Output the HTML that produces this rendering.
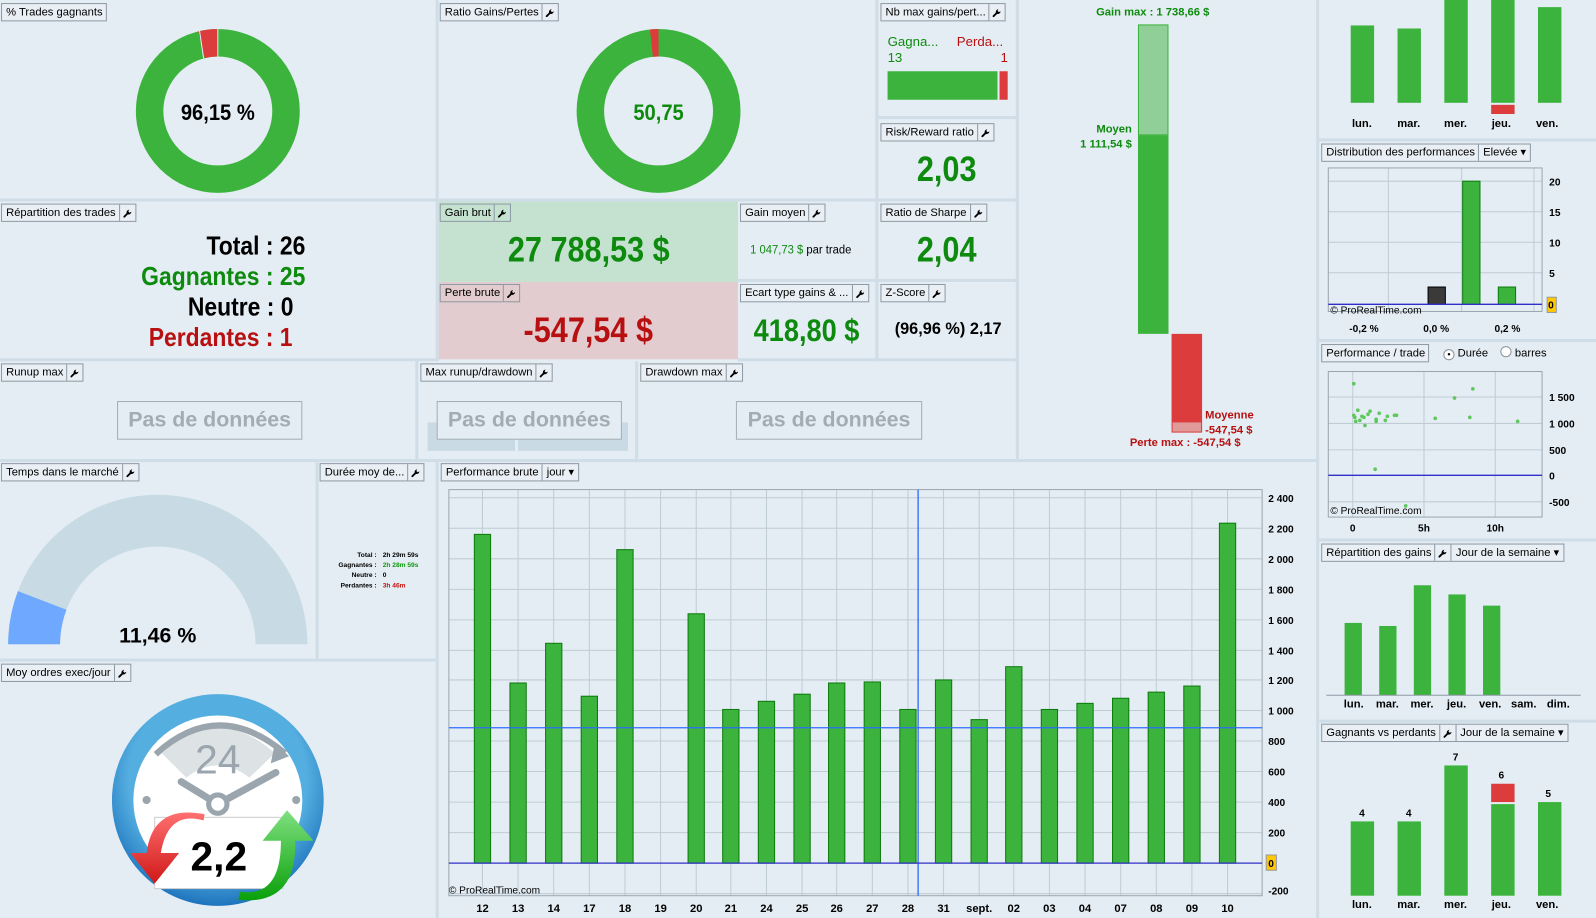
<!DOCTYPE html>
<html><head><meta charset="utf-8">
<style>
html,body{margin:0;padding:0;width:1596px;height:918px;overflow:hidden;background:#e4edf4;}
#root{position:absolute;left:0;top:0;width:1568px;height:902px;transform:scale(1.01786);transform-origin:0 0;font-family:"Liberation Sans",sans-serif;background:#e4edf4;}
.p{position:absolute;box-sizing:border-box;border-right:3px solid #d0dde7;border-bottom:3px solid #d0dde7;}
.h{position:absolute;display:flex;height:16px;border:1px solid #8e9aa4;background:#e9eff4;font-size:11px;line-height:16px;color:#000;white-space:nowrap;box-sizing:content-box;}
.h span{padding:0 3px 0 4px;}
.h i{border-left:1px solid #8e9aa4;width:15px;display:flex;align-items:center;justify-content:center;}
.h b{border-left:1px solid #8e9aa4;padding:0 4px;font-weight:normal;}
.t{position:absolute;white-space:nowrap;}
.cn{display:inline-block;transform:scaleX(.86);}
.nd{position:absolute;border:1px solid #a3adb5;color:#a3acb4;font-weight:bold;font-size:21px;text-align:center;line-height:36px;height:36px;background:#e4edf4;}
svg text{font-family:"Liberation Sans",sans-serif;}
</style></head><body><div id="root">
<svg width="0" height="0" style="position:absolute"><defs><symbol id="w" viewBox="0 0 10 10"><path d="M1.2 8.8L5 5" stroke="#000" stroke-width="2" stroke-linecap="round"/><path d="M4 5.5A3 3 0 0 1 6.2 1.2L6.6 1.1 5.6 3 7 4.4 8.9 3.4A3 3 0 0 1 4.5 6Z" fill="#000"/></symbol></defs></svg>

<!-- panels separators -->
<div class="p" style="left:0;top:0;width:431px;height:198px"></div>
<div class="p" style="left:431px;top:0;width:432px;height:198px"></div>
<div class="p" style="left:863px;top:0;width:138px;height:117px"></div>
<div class="p" style="left:863px;top:117px;width:138px;height:81px"></div>
<div class="p" style="left:1001px;top:0;width:295px;height:454px"></div>
<div class="p" style="left:0;top:198px;width:431px;height:157px"></div>
<div class="p" style="left:431px;top:198px;width:294px;height:79px;background:#c5e2d1;border-right:none;border-bottom:none"></div>
<div class="p" style="left:431px;top:277px;width:294px;height:76px;background:#e3ccd0;border-right:none;border-bottom:none"></div>
<div class="p" style="left:725px;top:198px;width:138px;height:79px"></div>
<div class="p" style="left:725px;top:277px;width:138px;height:78px"></div>
<div class="p" style="left:863px;top:198px;width:138px;height:79px"></div>
<div class="p" style="left:863px;top:277px;width:138px;height:78px"></div>
<div class="p" style="left:0;top:355px;width:411px;height:99px"></div>
<div class="p" style="left:411px;top:355px;width:216px;height:99px"></div>
<div class="p" style="left:627px;top:355px;width:374px;height:99px"></div>
<div class="p" style="left:0;top:454px;width:313px;height:196px"></div>
<div class="p" style="left:313px;top:454px;width:118px;height:196px"></div>
<div class="p" style="left:0;top:650px;width:431px;height:252px;border-bottom:none"></div>
<div class="p" style="left:431px;top:454px;width:865px;height:448px;border-bottom:none"></div>
<div class="p" style="left:1296px;top:0;width:272px;height:139px;border-right:none"></div>
<div class="p" style="left:1296px;top:139px;width:272px;height:197px;border-right:none"></div>
<div class="p" style="left:1296px;top:336px;width:272px;height:196px;border-right:none"></div>
<div class="p" style="left:1296px;top:532px;width:272px;height:178px;border-right:none"></div>

<!-- headers -->
<div class="h" style="left:1px;top:3px"><span>% Trades gagnants</span></div>
<div class="h" style="left:432px;top:3px"><span>Ratio Gains/Pertes</span><i><svg width="9" height="9"><use href="#w"/></svg></i></div>
<div class="h" style="left:865px;top:3px"><span>Nb max gains/pert...</span><i><svg width="9" height="9"><use href="#w"/></svg></i></div>
<div class="h" style="left:865px;top:121px"><span>Risk/Reward ratio</span><i><svg width="9" height="9"><use href="#w"/></svg></i></div>
<div class="h" style="left:1px;top:200px"><span>Répartition des trades</span><i><svg width="9" height="9"><use href="#w"/></svg></i></div>
<div class="h" style="left:432px;top:200px;background:#c5e2d1"><span>Gain brut</span><i><svg width="9" height="9"><use href="#w"/></svg></i></div>
<div class="h" style="left:432px;top:279px;background:#e3ccd0"><span>Perte brute</span><i><svg width="9" height="9"><use href="#w"/></svg></i></div>
<div class="h" style="left:727px;top:200px"><span>Gain moyen</span><i><svg width="9" height="9"><use href="#w"/></svg></i></div>
<div class="h" style="left:727px;top:279px"><span>Ecart type gains &amp; ...</span><i><svg width="9" height="9"><use href="#w"/></svg></i></div>
<div class="h" style="left:865px;top:200px"><span>Ratio de Sharpe</span><i><svg width="9" height="9"><use href="#w"/></svg></i></div>
<div class="h" style="left:865px;top:279px"><span>Z-Score</span><i><svg width="9" height="9"><use href="#w"/></svg></i></div>
<div class="h" style="left:1px;top:357px"><span>Runup max</span><i><svg width="9" height="9"><use href="#w"/></svg></i></div>
<div class="h" style="left:413px;top:357px"><span>Max runup/drawdown</span><i><svg width="9" height="9"><use href="#w"/></svg></i></div>
<div class="h" style="left:629px;top:357px"><span>Drawdown max</span><i><svg width="9" height="9"><use href="#w"/></svg></i></div>
<div class="h" style="left:1px;top:455px"><span>Temps dans le marché</span><i><svg width="9" height="9"><use href="#w"/></svg></i></div>
<div class="h" style="left:314px;top:455px"><span>Durée moy de...</span><i><svg width="9" height="9"><use href="#w"/></svg></i></div>
<div class="h" style="left:433px;top:455px"><span>Performance brute</span><b>jour &#9662;</b></div>
<div class="h" style="left:1px;top:652px"><span>Moy ordres exec/jour</span><i><svg width="9" height="9"><use href="#w"/></svg></i></div>
<div class="h" style="left:1298px;top:141px"><span>Distribution des performances</span><b>Elevée &#9662;</b></div>
<div class="h" style="left:1298px;top:338px"><span>Performance / trade</span></div>
<div class="t" style="left:1418px;top:339px;font-size:11px;line-height:16px"><span style="display:inline-block;width:9px;height:9px;border:1px solid #8a949c;border-radius:50%;background:#fff;vertical-align:-1px;text-align:center;line-height:9px;font-size:9px">•</span> Durée &nbsp;&nbsp; <span style="display:inline-block;width:9px;height:9px;border:1px solid #8a949c;border-radius:50%;background:#fff;vertical-align:-1px"></span> barres</div>
<div class="h" style="left:1298px;top:534px"><span>Répartition des gains</span><i><svg width="9" height="9"><use href="#w"/></svg></i><b>Jour de la semaine &#9662;</b></div>
<div class="h" style="left:1298px;top:711px"><span>Gagnants vs perdants</span><i><svg width="9" height="9"><use href="#w"/></svg></i><b>Jour de la semaine &#9662;</b></div>

<!-- donuts -->
<svg class="t" style="left:0;top:0" width="862" height="198">
<circle cx="214" cy="109" r="67" fill="none" stroke="#3cb33c" stroke-width="27"/>
<path d="M214 42A67 67 0 0 0 198 44" fill="none" stroke="#dd3c3c" stroke-width="27"/>
<line x1="214" y1="28" x2="214" y2="56" stroke="#e4edf4" stroke-width="1"/>
<line x1="196" y1="30" x2="200" y2="57" stroke="#e4edf4" stroke-width="1"/>
<text x="214" y="118" text-anchor="middle" font-size="22" font-weight="bold" transform="translate(214 0) scale(.9 1) translate(-214 0)">96,15 %</text>
<circle cx="647" cy="109" r="67" fill="none" stroke="#3cb33c" stroke-width="27"/>
<path d="M647 42A67 67 0 0 0 640 42.4" fill="none" stroke="#dd3c3c" stroke-width="27"/>
<text x="647" y="118" text-anchor="middle" font-size="22" font-weight="bold" fill="#0e8a0e" transform="translate(647 0) scale(.9 1) translate(-647 0)">50,75</text>
</svg>

<!-- Nb max -->
<div class="t" style="left:872px;top:33px;font-size:13px;color:#0e8a0e">Gagna...</div>
<div class="t" style="left:940px;top:33px;font-size:13px;color:#b81010">Perda...</div>
<div class="t" style="left:872px;top:49px;font-size:13px;color:#0e8a0e">13</div>
<div class="t" style="left:983px;top:49px;font-size:13px;color:#b81010">1</div>
<div class="t" style="left:872px;top:70px;width:108px;height:28px;background:#3cb33c"></div>
<div class="t" style="left:982px;top:70px;width:8px;height:28px;background:#dd3c3c"></div>
<div class="t" style="left:863px;top:147px;width:135px;text-align:center;font-size:35px;font-weight:bold;color:#0e8a0e"><span class="cn">2,03</span></div>

<!-- Répartition des trades -->
<div class="t" style="left:0;top:227px;width:300px;text-align:right;font-size:25px;font-weight:bold;line-height:30px;transform:scaleX(.9);transform-origin:300px 0">
<div>Total : 26</div><div style="color:#0e8a0e">Gagnantes : 25</div><div style="padding-right:13px">Neutre : 0</div><div style="color:#b81010;padding-right:14px">Perdantes : 1</div></div>

<div class="t" style="left:431px;top:226px;width:294px;text-align:center;font-size:35px;font-weight:bold;color:#0e8a0e"><span class="cn">27 788,53 $</span></div>
<div class="t" style="left:431px;top:305px;width:294px;text-align:center;font-size:35px;font-weight:bold;color:#b81010"><span class="cn">-547,54 $</span></div>
<div class="t" style="left:737px;top:238px;font-size:12px;color:#0e8a0e;transform:scaleX(.92);transform-origin:0 0">1 047,73 $ <span style="color:#000">par trade</span></div>
<div class="t" style="left:725px;top:307px;width:135px;text-align:center;font-size:31px;font-weight:bold;color:#0e8a0e"><span class="cn">418,80 $</span></div>
<div class="t" style="left:863px;top:226px;width:135px;text-align:center;font-size:35px;font-weight:bold;color:#0e8a0e"><span class="cn">2,04</span></div>
<div class="t" style="left:879px;top:315px;font-size:16px;font-weight:bold">(96,96 %) 2,17</div>

<!-- no data -->
<div class="t" style="left:420px;top:415px;width:86px;height:28px;background:#c9dae4"></div>
<div class="t" style="left:509px;top:415px;width:108px;height:28px;background:#c9dae4"></div>
<div class="nd" style="left:115px;top:394px;width:180px">Pas de données</div>
<div class="nd" style="left:429px;top:394px;width:180px">Pas de données</div>
<div class="nd" style="left:723px;top:394px;width:181px">Pas de données</div>

<!-- gain/loss vertical -->
<div class="t" style="left:1020px;top:6px;width:225px;text-align:center;font-size:11px;font-weight:bold;color:#0e8a0e">Gain max : 1 738,66 $</div>
<div class="t" style="left:1118px;top:24px;width:30px;height:109px;background:#90d098;outline:1px solid #3cb33c;outline-offset:-1px"></div>
<div class="t" style="left:1118px;top:133px;width:30px;height:195px;background:#3cb33c"></div>
<div class="t" style="left:1060px;top:120px;width:52px;text-align:right;font-size:11px;font-weight:bold;color:#0e8a0e;line-height:15px">Moyen<br>1 111,54 $</div>
<div class="t" style="left:1151px;top:328px;width:30px;height:97px;background:#dd3c3c"></div>
<div class="t" style="left:1152px;top:415px;width:28px;height:9px;background:#e09a9a"></div>
<div class="t" style="left:1184px;top:401px;font-size:11px;font-weight:bold;color:#b81010;line-height:15px">Moyenne<br>-547,54 $</div>
<div class="t" style="left:1110px;top:429px;font-size:11px;font-weight:bold;color:#b81010">Perte max : -547,54 $</div>

<!-- temps dans le marché gauge -->
<svg class="t" style="left:0;top:454px" width="313" height="196">
<path d="M8 179A147 147 0 0 1 302 179L251 179A96 96 0 0 0 59 179Z" fill="#c8dbe5"/>
<path d="M8 179A147 147 0 0 1 17.6 126.8L65.3 145A96 96 0 0 0 59 179Z" fill="#6fa8ff"/>
<text x="155" y="177" text-anchor="middle" font-size="21" font-weight="bold">11,46 %</text>
</svg>

<!-- durée moy -->
<div class="t" style="left:316px;top:541px;width:54px;text-align:right;font-size:6.5px;font-weight:bold;line-height:10px">Total :<br>Gagnantes :<br>Neutre :<br>Perdantes :</div>
<div class="t" style="left:376px;top:541px;font-size:6.5px;font-weight:bold;line-height:10px"><span>2h 29m 59s</span><br><span style="color:#0e9a0e">2h 28m 59s</span><br>0<br><span style="color:#c01010">3h 46m</span></div>

<!-- clock -->
<svg class="t" style="left:100px;top:675px" width="230" height="227" viewBox="100 675 230 227">
<defs><radialGradient id="rg" cx="0.5" cy="0.4" r="0.6"><stop offset="0.7" stop-color="#55aee0"/><stop offset="1" stop-color="#1e74bd"/></radialGradient>
<linearGradient id="gr" x1="0" y1="0" x2="0" y2="1"><stop offset="0" stop-color="#7fe07f"/><stop offset="1" stop-color="#0aa00a"/></linearGradient>
<linearGradient id="rd" x1="0" y1="0" x2="0" y2="1"><stop offset="0" stop-color="#ff7070"/><stop offset="1" stop-color="#d01818"/></linearGradient></defs>
<circle cx="214" cy="786" r="104" fill="url(#rg)"/>
<circle cx="214" cy="786" r="83" fill="#fff"/>
<path d="M159 740Q214 690 270 740L245 764Q214 740 183 764Z" fill="#dde2e5"/>
<path d="M153 741Q214 685 280 740" fill="none" stroke="#9aa5ad" stroke-width="6"/>
<path d="M270 730L284 743L266 750Z" fill="#9aa5ad"/>
<text x="214" y="760" text-anchor="middle" font-size="40" fill="#9aa5ad">24</text>
<path d="M178 768L214 790L271 759" fill="none" stroke="#9aa5ad" stroke-width="7" stroke-linecap="round"/>
<circle cx="214" cy="790" r="9" fill="#fff" stroke="#9aa5ad" stroke-width="5"/>
<circle cx="144" cy="786" r="4" fill="#9aa5ad"/><circle cx="291" cy="786" r="4" fill="#9aa5ad"/>
<rect x="152" y="803" width="126" height="70" fill="#fff" stroke="#ccc"/>
<path d="M200 806Q165 796 158 838L176 838L152 868L128 838L144 838Q150 790 201 800Z" fill="url(#rd)"/>
<path d="M236 876Q276 882 276 826L258 826L282 796L308 826L290 826Q292 890 234 884Z" fill="url(#gr)"/>
<text x="215" y="855" text-anchor="middle" font-size="40" font-weight="bold">2,2</text>
</svg>

<!-- performance brute chart -->
<svg class="t" style="left:431px;top:454px" width="865" height="448" viewBox="431 454 865 448">
<g stroke="#bfccd4" stroke-width="1">
<line x1="441" x2="1240" y1="489" y2="489"/><line x1="441" x2="1240" y1="519" y2="519"/><line x1="441" x2="1240" y1="549" y2="549"/><line x1="441" x2="1240" y1="579" y2="579"/><line x1="441" x2="1240" y1="609" y2="609"/><line x1="441" x2="1240" y1="639" y2="639"/><line x1="441" x2="1240" y1="668" y2="668"/><line x1="441" x2="1240" y1="698" y2="698"/><line x1="441" x2="1240" y1="728" y2="728"/><line x1="441" x2="1240" y1="758" y2="758"/><line x1="441" x2="1240" y1="788" y2="788"/><line x1="441" x2="1240" y1="818" y2="818"/><line x1="441" x2="1240" y1="878" y2="878"/>
<line y1="481" y2="880" x1="474" x2="474"/><line y1="481" y2="880" x1="509" x2="509"/><line y1="481" y2="880" x1="544" x2="544"/><line y1="481" y2="880" x1="579" x2="579"/><line y1="481" y2="880" x1="614" x2="614"/><line y1="481" y2="880" x1="649" x2="649"/><line y1="481" y2="880" x1="684" x2="684"/><line y1="481" y2="880" x1="718" x2="718"/><line y1="481" y2="880" x1="753" x2="753"/><line y1="481" y2="880" x1="788" x2="788"/><line y1="481" y2="880" x1="822" x2="822"/><line y1="481" y2="880" x1="857" x2="857"/><line y1="481" y2="880" x1="892" x2="892"/><line y1="481" y2="880" x1="927" x2="927"/><line y1="481" y2="880" x1="962" x2="962"/><line y1="481" y2="880" x1="996" x2="996"/><line y1="481" y2="880" x1="1031" x2="1031"/><line y1="481" y2="880" x1="1066" x2="1066"/><line y1="481" y2="880" x1="1101" x2="1101"/><line y1="481" y2="880" x1="1136" x2="1136"/><line y1="481" y2="880" x1="1171" x2="1171"/><line y1="481" y2="880" x1="1206" x2="1206"/>
</g>
<rect x="441" y="481" width="799" height="399" fill="none" stroke="#9aa6ae"/>
<g fill="#3cb33c" stroke="#0c7a0c" stroke-width="1">
<rect x="466" y="525" width="16" height="323"/><rect x="501" y="671" width="16" height="177"/><rect x="536" y="632" width="16" height="216"/><rect x="571" y="684" width="16" height="164"/><rect x="606" y="540" width="16" height="308"/><rect x="676" y="603" width="16" height="245"/><rect x="710" y="697" width="16" height="151"/><rect x="745" y="689" width="16" height="159"/><rect x="780" y="682" width="16" height="166"/><rect x="814" y="671" width="16" height="177"/><rect x="849" y="670" width="16" height="178"/><rect x="884" y="697" width="16" height="151"/><rect x="919" y="668" width="16" height="180"/><rect x="954" y="707" width="16" height="141"/><rect x="988" y="655" width="16" height="193"/><rect x="1023" y="697" width="16" height="151"/><rect x="1058" y="691" width="16" height="157"/><rect x="1093" y="686" width="16" height="162"/><rect x="1128" y="680" width="16" height="168"/><rect x="1163" y="674" width="16" height="174"/><rect x="1198" y="514" width="16" height="334"/>
</g>
<line x1="441" x2="1240" y1="715" y2="715" stroke="#2f6bff" stroke-width="1.3"/>
<line x1="902" x2="902" y1="481" y2="880" stroke="#2f6bff" stroke-width="1.3"/>
<line x1="441" x2="1240" y1="848" y2="848" stroke="#3030c8" stroke-width="1.3"/>
<text x="441" y="878" font-size="10">© ProRealTime.com</text>
<g font-size="10" font-weight="bold">
<text x="1246" y="493">2 400</text><text x="1246" y="523">2 200</text><text x="1246" y="553">2 000</text><text x="1246" y="583">1 800</text><text x="1246" y="613">1 600</text><text x="1246" y="643">1 400</text><text x="1246" y="672">1 200</text><text x="1246" y="702">1 000</text><text x="1246" y="732">800</text><text x="1246" y="762">600</text><text x="1246" y="792">400</text><text x="1246" y="822">200</text><text x="1246" y="879">-200</text>
</g>
<rect x="1244" y="840" width="10" height="15" fill="#ffc800" stroke="#999"/>
<text x="1246" y="852" font-size="10" font-weight="bold">0</text>
<g font-size="11" font-weight="bold" text-anchor="middle">
<text x="474" y="896">12</text><text x="509" y="896">13</text><text x="544" y="896">14</text><text x="579" y="896">17</text><text x="614" y="896">18</text><text x="649" y="896">19</text><text x="684" y="896">20</text><text x="718" y="896">21</text><text x="753" y="896">24</text><text x="788" y="896">25</text><text x="822" y="896">26</text><text x="857" y="896">27</text><text x="892" y="896">28</text><text x="927" y="896">31</text><text x="962" y="896">sept.</text><text x="996" y="896">02</text><text x="1031" y="896">03</text><text x="1066" y="896">04</text><text x="1101" y="896">07</text><text x="1136" y="896">08</text><text x="1171" y="896">09</text><text x="1206" y="896">10</text>
</g>
</svg>

<!-- right column -->
<svg class="t" style="left:1296px;top:0" width="272" height="902" viewBox="1296 0 272 902">
<g fill="#3cb33c"><rect x="1327" y="25" width="23" height="76"/><rect x="1373" y="28" width="23" height="73"/><rect x="1419" y="0" width="23" height="101"/><rect x="1465" y="0" width="23" height="101"/><rect x="1511" y="7" width="23" height="94"/></g>
<rect x="1465" y="103" width="23" height="9" fill="#dd3c3c"/>
<g font-size="11" font-weight="bold" text-anchor="middle"><text x="1338" y="125">lun.</text><text x="1384" y="125">mar.</text><text x="1430" y="125">mer.</text><text x="1475" y="125">jeu.</text><text x="1520" y="125">ven.</text></g>
<g stroke="#bfccd4"><line x1="1305" x2="1515" y1="178" y2="178"/><line x1="1305" x2="1515" y1="208" y2="208"/><line x1="1305" x2="1515" y1="238" y2="238"/><line x1="1305" x2="1515" y1="268" y2="268"/><line y1="165" y2="306" x1="1364" x2="1364"/><line y1="165" y2="306" x1="1436" x2="1436"/><line y1="165" y2="306" x1="1507" x2="1507"/></g>
<rect x="1305" y="165" width="210" height="141" fill="none" stroke="#9aa6ae"/>
<rect x="1403" y="282" width="17" height="17" fill="#3a3a3a" stroke="#000"/>
<rect x="1437" y="178" width="17" height="121" fill="#3cb33c" stroke="#0c7a0c"/>
<rect x="1472" y="282" width="17" height="17" fill="#3cb33c" stroke="#0c7a0c"/>
<line x1="1305" x2="1515" y1="299" y2="299" stroke="#3030c8" stroke-width="1.3"/>
<text x="1307" y="308" font-size="10">© ProRealTime.com</text>
<g font-size="10" font-weight="bold"><text x="1522" y="182">20</text><text x="1522" y="212">15</text><text x="1522" y="242">10</text><text x="1522" y="272">5</text></g>
<rect x="1520" y="292" width="9" height="15" fill="#ffc800" stroke="#999"/><text x="1521" y="303" font-size="10" font-weight="bold">0</text>
<g font-size="10" font-weight="bold" text-anchor="middle"><text x="1340" y="326">-0,2 %</text><text x="1411" y="326">0,0 %</text><text x="1481" y="326">0,2 %</text></g>
<g stroke="#bfccd4"><line x1="1305" x2="1515" y1="390" y2="390"/><line x1="1305" x2="1515" y1="416" y2="416"/><line x1="1305" x2="1515" y1="442" y2="442"/><line x1="1305" x2="1515" y1="493" y2="493"/><line y1="365" y2="508" x1="1329" x2="1329"/><line y1="365" y2="508" x1="1399" x2="1399"/><line y1="365" y2="508" x1="1469" x2="1469"/></g>
<rect x="1305" y="365" width="210" height="143" fill="none" stroke="#9aa6ae"/>
<line x1="1305" x2="1515" y1="467" y2="467" stroke="#3030c8" stroke-width="1.3"/>
<g fill="#5ec85e"><circle cx="1330" cy="377" r="1.8"/><circle cx="1330" cy="408" r="1.8"/><circle cx="1331" cy="410" r="1.8"/><circle cx="1334" cy="403" r="1.8"/><circle cx="1332" cy="414" r="1.8"/><circle cx="1336" cy="413" r="1.8"/><circle cx="1338" cy="409" r="1.8"/><circle cx="1340" cy="410" r="1.8"/><circle cx="1341" cy="418" r="1.8"/><circle cx="1344" cy="407" r="1.8"/><circle cx="1346" cy="404" r="1.8"/><circle cx="1352" cy="412" r="1.8"/><circle cx="1352" cy="414" r="1.8"/><circle cx="1355" cy="406" r="1.8"/><circle cx="1361" cy="413" r="1.8"/><circle cx="1363" cy="409" r="1.8"/><circle cx="1370" cy="408" r="1.8"/><circle cx="1372" cy="408" r="1.8"/><circle cx="1410" cy="411" r="1.8"/><circle cx="1429" cy="391" r="1.8"/><circle cx="1444" cy="410" r="1.8"/><circle cx="1447" cy="382" r="1.8"/><circle cx="1491" cy="414" r="1.8"/><circle cx="1351" cy="461" r="1.8"/><circle cx="1381" cy="497" r="1.8"/></g>
<text x="1307" y="505" font-size="10">© ProRealTime.com</text>
<g font-size="10" font-weight="bold"><text x="1522" y="394">1 500</text><text x="1522" y="420">1 000</text><text x="1522" y="446">500</text><text x="1522" y="471">0</text><text x="1522" y="497">-500</text></g>
<g font-size="10" font-weight="bold" text-anchor="middle"><text x="1329" y="522">0</text><text x="1399" y="522">5h</text><text x="1469" y="522">10h</text></g>
<g fill="#3cb33c"><rect x="1321" y="612" width="17" height="71"/><rect x="1355" y="615" width="17" height="68"/><rect x="1389" y="575" width="17" height="108"/><rect x="1423" y="584" width="17" height="99"/><rect x="1457" y="595" width="17" height="88"/></g>
<line x1="1303" x2="1553" y1="683" y2="683" stroke="#8e9aa4"/>
<g font-size="11" font-weight="bold" text-anchor="middle"><text x="1330" y="695">lun.</text><text x="1363" y="695">mar.</text><text x="1397" y="695">mer.</text><text x="1431" y="695">jeu.</text><text x="1464" y="695">ven.</text><text x="1497" y="695">sam.</text><text x="1531" y="695">dim.</text></g>
<g fill="#3cb33c"><rect x="1327" y="807" width="23" height="73"/><rect x="1373" y="807" width="23" height="73"/><rect x="1419" y="752" width="23" height="128"/><rect x="1465" y="790" width="23" height="90"/><rect x="1511" y="788" width="23" height="92"/></g>
<rect x="1465" y="770" width="23" height="18" fill="#dd3c3c"/>
<g font-size="10" font-weight="bold" text-anchor="middle"><text x="1338" y="802">4</text><text x="1384" y="802">4</text><text x="1430" y="747">7</text><text x="1475" y="765">6</text><text x="1521" y="783">5</text></g>
<g font-size="11" font-weight="bold" text-anchor="middle"><text x="1338" y="892">lun.</text><text x="1384" y="892">mar.</text><text x="1430" y="892">mer.</text><text x="1475" y="892">jeu.</text><text x="1520" y="892">ven.</text></g>
</svg>

</div></body></html>
